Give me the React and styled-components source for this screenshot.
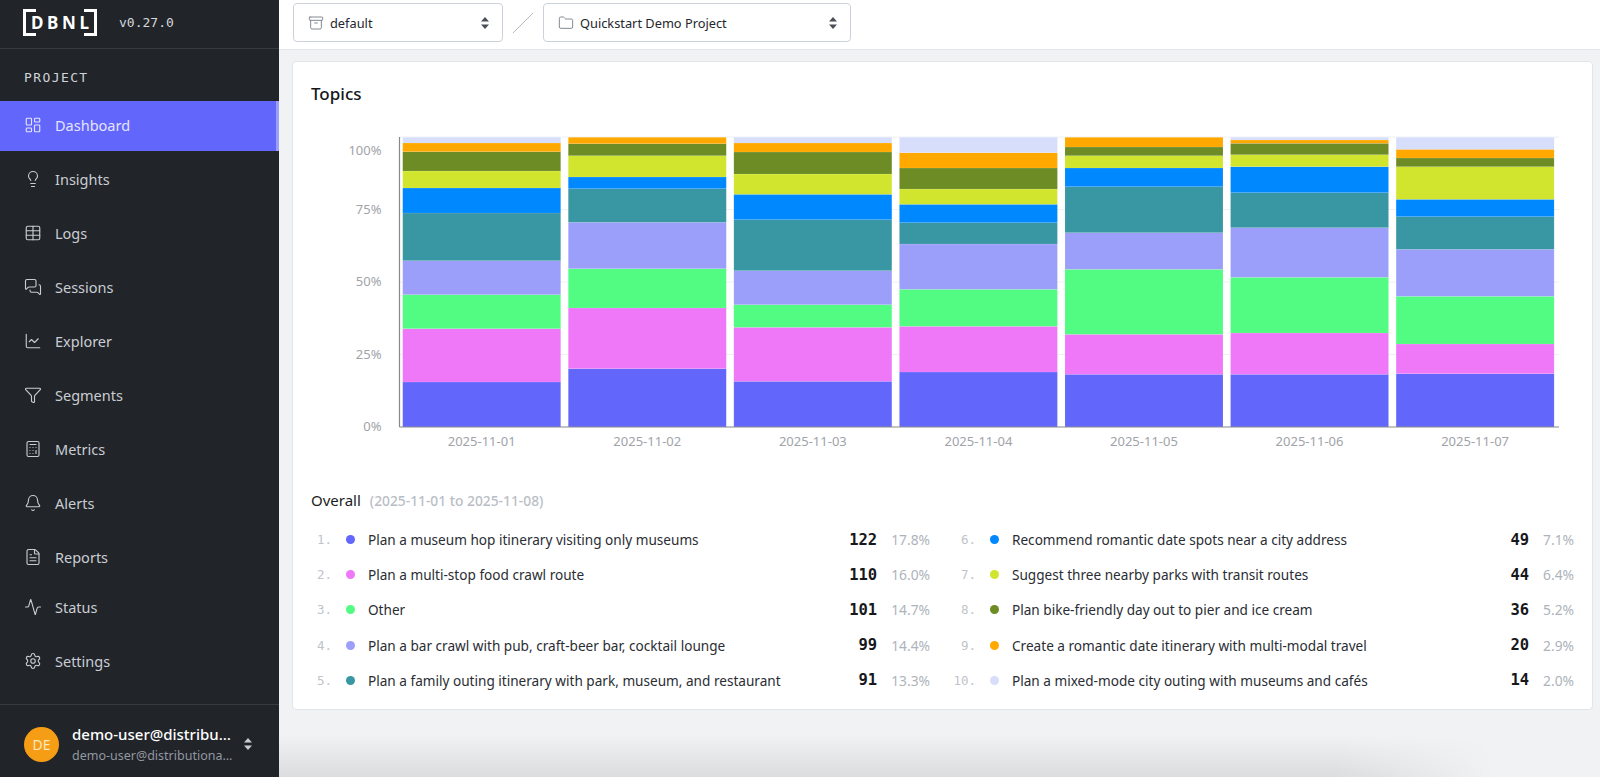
import React from 'react';
import styled, { createGlobalStyle } from 'styled-components';
import {
  LayoutDashboard,
  Lightbulb,
  Table,
  MessagesSquare,
  ChartLine,
  Funnel,
  Calculator,
  Bell,
  FileText,
  Activity,
  Settings,
  Archive,
  Folder,
} from 'lucide-react';

const SANS = '"Noto Sans", "Liberation Sans", sans-serif';
const MONO = '"DejaVu Sans Mono", "Liberation Mono", monospace';

const COLORS = ['#6366fa', '#ee78f8', '#52fc82', '#9c9ffa', '#3997a3', '#0088ff', '#d1e52f', '#6d8c25', '#ffa900', '#d6defc'];

// segment tops, measured from the chart baseline, per day
const DAYS = [
  { date: '2025-11-01', tops: [45, 98.3, 132.3, 166.3, 214, 239, 256, 275.3, 284, 289.7] },
  { date: '2025-11-02', tops: [58.3, 119, 158.3, 204.7, 238.3, 250, 271.3, 283.3, 289.7, 289.7] },
  { date: '2025-11-03', tops: [45.7, 99.7, 122.3, 156.3, 207.3, 232.7, 253, 275, 284, 289.7] },
  { date: '2025-11-04', tops: [55, 100.7, 137.7, 183, 204.3, 222.7, 238, 259, 274.3, 289.7] },
  { date: '2025-11-05', tops: [52.7, 92.7, 157.7, 194.3, 240.3, 259, 271.3, 280, 289.7, 289.7] },
  { date: '2025-11-06', tops: [52.7, 94, 149.7, 199.3, 234.3, 260.3, 272.3, 283.7, 287, 289.7] },
  { date: '2025-11-07', tops: [53.3, 83, 130.7, 177.7, 210.3, 227.7, 260.3, 269, 277.7, 289.7] },
];

const NAV = [
  { label: 'Dashboard', icon: LayoutDashboard, active: true },
  { label: 'Insights', icon: Lightbulb },
  { label: 'Logs', icon: Table },
  { label: 'Sessions', icon: MessagesSquare },
  { label: 'Explorer', icon: ChartLine },
  { label: 'Segments', icon: Funnel },
  { label: 'Metrics', icon: Calculator },
  { label: 'Alerts', icon: Bell },
  { label: 'Reports', icon: FileText },
  { label: 'Status', icon: Activity, tight: true },
  { label: 'Settings', icon: Settings },
];

const TOPICS = [
  ['Plan a museum hop itinerary visiting only museums', 122, '17.8%'],
  ['Plan a multi-stop food crawl route', 110, '16.0%'],
  ['Other', 101, '14.7%'],
  ['Plan a bar crawl with pub, craft-beer bar, cocktail lounge', 99, '14.4%'],
  ['Plan a family outing itinerary with park, museum, and restaurant', 91, '13.3%'],
  ['Recommend romantic date spots near a city address', 49, '7.1%'],
  ['Suggest three nearby parks with transit routes', 44, '6.4%'],
  ['Plan bike-friendly day out to pier and ice cream', 36, '5.2%'],
  ['Create a romantic date itinerary with multi-modal travel', 20, '2.9%'],
  ['Plan a mixed-mode city outing with museums and cafés', 14, '2.0%'],
];

const GlobalStyle = createGlobalStyle`
  html, body {
    margin: 0;
    height: 100%;
    overflow: hidden;
    font-family: ${SANS};
  }
  * {
    box-sizing: border-box;
  }
`;

const Page = styled.div`
  display: flex;
  height: 777px;
  width: 1600px;
  background: #f1f2f4;
`;

const Sidebar = styled.aside`
  display: flex;
  flex-direction: column;
  flex: 0 0 279px;
  background: #212429;
  color: #c9cdd3;
`;

const Brand = styled.div`
  display: flex;
  align-items: center;
  gap: 22px;
  height: 49px;
  padding: 0 0 3px 23px;
  border-bottom: 1px solid #363b43;
`;

const Logo = styled.div`
  display: flex;
  align-items: center;
  justify-content: space-between;
  width: 74px;
  height: 27px;
  padding: 0 5px;
  color: #fff;
  font-family: ${SANS};
  font-size: 17px;
  font-weight: 700;
  border-left: 3px solid #fff;
  border-right: 3px solid #fff;
  position: relative;

  &::before,
  &::after {
    content: '';
    position: absolute;
    left: 0;
    right: 0;
    height: 3px;
    background: linear-gradient(90deg, #fff 0 10px, transparent 10px calc(100% - 10px), #fff calc(100% - 10px));
  }
  &::before {
    top: 0;
  }
  &::after {
    bottom: 0;
  }
`;

const Version = styled.span`
  font-family: ${MONO};
  font-size: 13px;
  color: #d6d8dc;
`;

const SectionLabel = styled.div`
  display: flex;
  align-items: center;
  height: 50px;
  padding: 7px 0 0 24px;
  font-family: ${MONO};
  font-size: 13px;
  letter-spacing: 1.4px;
  color: #d0d3d8;
`;

const Nav = styled.nav`
  display: flex;
  flex-direction: column;
  flex: 1;
`;

const NavItem = styled.a`
  display: flex;
  align-items: center;
  gap: 13px;
  height: 50px;
  margin: ${(p) => (p.$tight ? '-2px' : '2px')} 0 2px;
  padding: 0 0 3px 24px;
  font-size: 14.5px;
  color: ${(p) => (p.$active ? '#e4e4ff' : '#c9cdd3')};
  background: ${(p) => (p.$active ? '#6366fa' : 'transparent')};
  border-right: 3px solid ${(p) => (p.$active ? '#9c9ffa' : 'transparent')};
`;

const UserRow = styled.div`
  display: flex;
  align-items: center;
  height: 73px;
  padding: 6px 0 0 24px;
  border-top: 1px solid #363b43;
`;

const Avatar = styled.div`
  display: flex;
  align-items: center;
  justify-content: center;
  flex: 0 0 35px;
  height: 35px;
  border-radius: 50%;
  background: #f59e15;
  color: #fde7c0;
  font-size: 14px;
`;

const UserText = styled.div`
  display: flex;
  flex-direction: column;
  gap: 4px;
  width: 163px;
  margin: 0 8px 0 13px;
`;

const UserName = styled.div`
  overflow: hidden;
  white-space: nowrap;
  text-overflow: ellipsis;
  font-size: 15px;
  line-height: 18px;
  font-weight: 500;
  color: #fff;
`;

const UserEmail = styled.div`
  overflow: hidden;
  white-space: nowrap;
  text-overflow: ellipsis;
  font-size: 12.5px;
  line-height: 17px;
  color: #9197a0;
`;

const Main = styled.main`
  display: flex;
  flex-direction: column;
  flex: 1;
  min-width: 0;
  position: relative;
  overflow: hidden;
`;

const TopBar = styled.header`
  display: flex;
  align-items: center;
  height: 50px;
  padding: 0 0 4px 14px;
  background: #fff;
  border-bottom: 1px solid #e2e5e9;
`;

const Select = styled.div`
  display: flex;
  align-items: center;
  width: ${(p) => p.$width}px;
  height: 39px;
  padding: 0 12px 0 14px;
  gap: 6px;
  border: 1px solid #cdd2da;
  border-radius: 4px;
  background: #fff;
  font-size: 12.8px;
  color: #24272c;
  svg:first-child {
    color: #7b818a;
  }
`;

const SelectLabel = styled.span`
  flex: 1;
`;

const Slash = styled.svg`
  flex: 0 0 20px;
  height: 20px;
  margin: 0 10px;
`;

const Card = styled.section`
  display: flex;
  flex-direction: column;
  height: 649px;
  margin: 11px 7px 0 13px;
  padding: 21px 18px 0;
  background: #fff;
  border: 1px solid #e1e4e9;
  border-radius: 4px;
`;

const CardTitle = styled.h2`
  margin: 0;
  font-size: 17px;
  line-height: 22px;
  font-weight: 500;
  color: #14161a;
`;

const ChartSvg = styled.svg`
  display: block;
  width: 1263px;
  height: 330px;
  margin: 11px 0 0;
  flex: none;
`;

const AxisText = styled.text`
  font-family: ${SANS};
  font-size: 13px;
  fill: #a0a3a9;
`;

const OverallHead = styled.div`
  display: flex;
  align-items: baseline;
  gap: 9px;
  margin-top: 44px;
  font-size: 15px;
  line-height: 20px;
  color: #1b1d21;
`;

const OverallRange = styled.span`
  font-size: 13.8px;
  font-weight: 500;
  color: #b9bec6;
`;

const Legend = styled.ol`
  display: grid;
  grid-template-columns: 1fr 1fr;
  grid-template-rows: repeat(5, 35.2px);
  grid-auto-flow: column;
  column-gap: 25px;
  margin: 11px 0 0;
  padding: 0;
  list-style: none;
`;

const LegendRow = styled.li`
  display: grid;
  grid-template-columns: 21px 9px 1fr auto auto;
  align-items: center;
  font-size: 13.6px;
  color: #2a2d33;
`;

const Rank = styled.span`
  justify-self: end;
  font-family: ${MONO};
  font-size: 12.5px;
  color: #c0c4cb;
  white-space: nowrap;
`;

const Dot = styled.span`
  width: 9px;
  height: 9px;
  margin-left: 14px;
  border-radius: 50%;
  background: ${(p) => p.$color};
`;

const TopicName = styled.span`
  padding-left: 27px;
  white-space: nowrap;
`;

const Count = styled.span`
  font-family: ${MONO};
  font-size: 15.5px;
  font-weight: 700;
  color: #16181c;
`;

const Pct = styled.span`
  margin-left: 14px;
  font-size: 13.8px;
  color: #aeb3bb;
`;

const BottomShade = styled.div`
  position: absolute;
  left: 0;
  right: 0;
  bottom: 0;
  height: 42px;
  background: linear-gradient(180deg, rgba(0, 0, 0, 0), rgba(0, 0, 0, 0.085));
  mask-image: linear-gradient(90deg, #000 80%, transparent 92%);
  pointer-events: none;
`;

const Carets = ({ color = '#4a4f57' }) => (
  <svg width="10" height="14" viewBox="0 0 10 14" aria-hidden="true">
    <path d="M5 1 L9 5.5 H1 Z M5 13 L1 8.5 H9 Z" fill={color} />
  </svg>
);

// plot box inside the svg
const PLOT = { left: 88.5, right: 1248, top: 21, bottom: 311, band: 165.57, barWidth: 158 };

const TopicsChart = () => {
  const { left, right, top, bottom, band, barWidth } = PLOT;
  const grid = [
    { label: '75%', y: bottom - 217.5 },
    { label: '50%', y: bottom - 145 },
    { label: '25%', y: bottom - 72.5 },
  ];
  return (
    <ChartSvg viewBox="0 0 1263 330">
      {grid.map((g) => (
        <line key={g.label} x1={left} x2={right} y1={g.y} y2={g.y} stroke="#eef0f2" />
      ))}
      <line x1={left} x2={right} y1={top} y2={top} stroke="#eef0f2" />
      {DAYS.map((day, d) => {
        const x = left + 3.2 + d * band;
        return (
          <g key={day.date}>
            {day.tops.map((t, i) => {
              const prev = i === 0 ? 0 : day.tops[i - 1];
              return (
                <rect
                  key={i}
                  x={x}
                  y={bottom - t}
                  width={barWidth}
                  height={t - prev}
                  fill={COLORS[i]}
                  stroke="#ffffff"
                  strokeOpacity="0.2"
                  strokeWidth="0.5"
                />
              );
            })}
            <AxisText x={x + barWidth / 2} y={bottom + 19} textAnchor="middle">
              {day.date}
            </AxisText>
          </g>
        );
      })}
      <line x1={left} x2={left} y1={top} y2={bottom} stroke="#85888e" strokeWidth="1.2" />
      <line x1={left} x2={right} y1={bottom} y2={bottom} stroke="#85888e" strokeWidth="1.2" />
      <AxisText x={left - 18} y={top + 18} textAnchor="end">100%</AxisText>
      {grid.map((g) => (
        <AxisText key={g.label} x={left - 18} y={g.y + 4} textAnchor="end">
          {g.label}
        </AxisText>
      ))}
      <AxisText x={left - 18} y={bottom + 4} textAnchor="end">0%</AxisText>
    </ChartSvg>
  );
};

export default function App() {
  return (
    <Page>
      <GlobalStyle />
      <Sidebar>
        <Brand>
          <Logo>
            <span>D</span>
            <span>B</span>
            <span>N</span>
            <span>L</span>
          </Logo>
          <Version>v0.27.0</Version>
        </Brand>
        <SectionLabel>PROJECT</SectionLabel>
        <Nav>
          {NAV.map(({ label, icon: Icon, active, tight }) => (
            <NavItem key={label} $active={active} $tight={tight}>
              <Icon size={18} strokeWidth={1.5} />
              {label}
            </NavItem>
          ))}
        </Nav>
        <UserRow>
          <Avatar>DE</Avatar>
          <UserText>
            <UserName>demo-user@distributionalai.com</UserName>
            <UserEmail>demo-user@distributionalai.com</UserEmail>
          </UserText>
          <Carets color="#c9cdd3" />
        </UserRow>
      </Sidebar>
      <Main>
        <TopBar>
          <Select $width={210}>
            <Archive size={16} strokeWidth={1.4} />
            <SelectLabel>default</SelectLabel>
            <Carets />
          </Select>
          <Slash viewBox="0 0 20 20">
            <line x1="0" y1="20" x2="20" y2="0" stroke="#b4b9c1" />
          </Slash>
          <Select $width={308}>
            <Folder size={16} strokeWidth={1.4} />
            <SelectLabel>Quickstart Demo Project</SelectLabel>
            <Carets />
          </Select>
        </TopBar>
        <Card>
          <CardTitle>Topics</CardTitle>
          <TopicsChart />
          <OverallHead>
            Overall
            <OverallRange>(2025-11-01 to 2025-11-08)</OverallRange>
          </OverallHead>
          <Legend>
            {TOPICS.map(([name, count, pct], i) => (
              <LegendRow key={name}>
                <Rank>{i + 1}.</Rank>
                <Dot $color={COLORS[i]} />
                <TopicName>{name}</TopicName>
                <Count>{count}</Count>
                <Pct>{pct}</Pct>
              </LegendRow>
            ))}
          </Legend>
        </Card>
        <BottomShade />
      </Main>
    </Page>
  );
}
